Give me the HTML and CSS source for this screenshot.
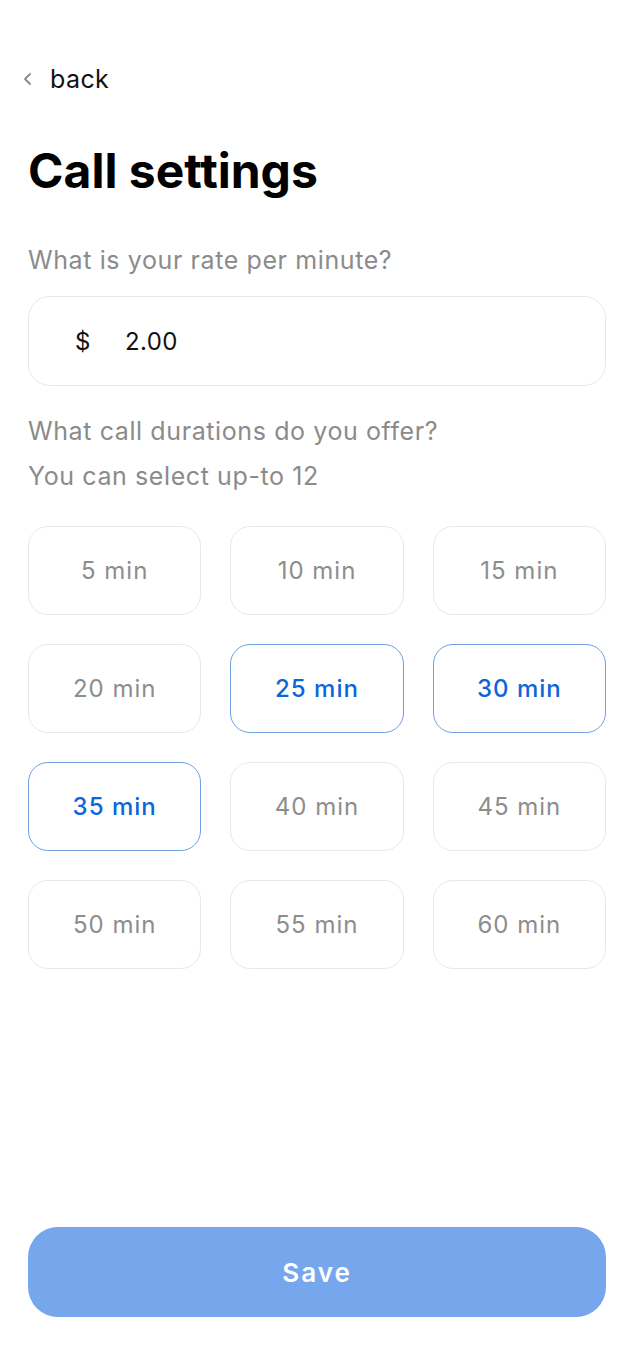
FILE: index.html
```html
<!DOCTYPE html>
<html>
<head>
<meta charset="utf-8">
<link rel="stylesheet" href="styles.css">
</head>
<body>
<div class="screen">
  <div class="back">
    <svg class="chev" width="12" height="14" viewBox="0 0 12 14"><path d="M8 2 L3 7 L8 12" fill="none" stroke="#8a8a8a" stroke-width="1.8" stroke-linecap="round" stroke-linejoin="round"/></svg>
    <span>back</span>
  </div>
  <h1 class="title">Call settings</h1>
  <p class="label first">What is your rate per minute?</p>
  <div class="field"><span class="cur">$</span><span class="val">2.00</span></div>
  <p class="label q">What call durations do you offer?</p>
  <p class="label sub">You can select up-to 12</p>
  <div class="grid">
    <div class="opt">5 min</div>
    <div class="opt">10 min</div>
    <div class="opt">15 min</div>
    <div class="opt">20 min</div>
    <div class="opt sel">25 min</div>
    <div class="opt sel">30 min</div>
    <div class="opt sel">35 min</div>
    <div class="opt">40 min</div>
    <div class="opt">45 min</div>
    <div class="opt">50 min</div>
    <div class="opt">55 min</div>
    <div class="opt">60 min</div>
  </div>
  <div class="spacer"></div>
  <button class="save">Save</button>
</div>
</body>
</html>
```
FILE: styles.css
```css
* { box-sizing: border-box; }
html, body { margin: 0; padding: 0; background: #fff; }
body { font-family: Inter, "Noto Sans", sans-serif; }
.screen {
  width: 632px;
  height: 1366px;
  padding: 62px 26px 49px 28px;
  display: flex;
  flex-direction: column;
}
.back {
  display: flex;
  align-items: center;
  gap: 16px;
  margin-left: -6px;
  height: 34px;
  font-size: 25px;
  letter-spacing: 0.4px;
  color: #111;
}
.chev { display: block; }
.title {
  margin: 46px 0 0;
  font-size: 48px;
  font-weight: 700;
  letter-spacing: 0;
  line-height: 58px;
  color: #000;
}
.label {
  margin: 0;
  font-size: 25px;
  letter-spacing: 0.6px;
  line-height: 30px;
  color: #8b8b8b;
}
.label.first { margin-top: 45px; }
.field {
  margin-top: 21px;
  height: 90px;
  border: 1.5px solid #e8e8e8;
  border-radius: 22px;
  display: flex;
  align-items: center;
  padding-left: 46px;
  font-size: 24px;
  letter-spacing: 0.4px;
  color: #111;
}
.cur { width: 50px; }
.label.q { margin-top: 30px; }
.label.sub { margin-top: 15px; }
.grid {
  margin-top: 35px;
  display: grid;
  grid-template-columns: repeat(3, 1fr);
  column-gap: 29px;
  row-gap: 29px;
}
.opt {
  height: 89px;
  border: 1.5px solid #e8e8e8;
  border-radius: 20px;
  display: flex;
  align-items: center;
  justify-content: center;
  font-size: 24px;
  letter-spacing: 1px;
  color: #8d8d8d;
}
.opt.sel {
  border-color: #6f9fe0;
  color: #0b66dc;
  font-weight: 500;
}
.spacer { flex: 1; }
.save {
  height: 90px;
  width: 100%;
  border: none;
  border-radius: 30px;
  background: #76a7ed;
  color: #fff;
  font-family: Inter, "Noto Sans", sans-serif;
  font-size: 26px;
  font-weight: 600;
  letter-spacing: 2px;
}
```
